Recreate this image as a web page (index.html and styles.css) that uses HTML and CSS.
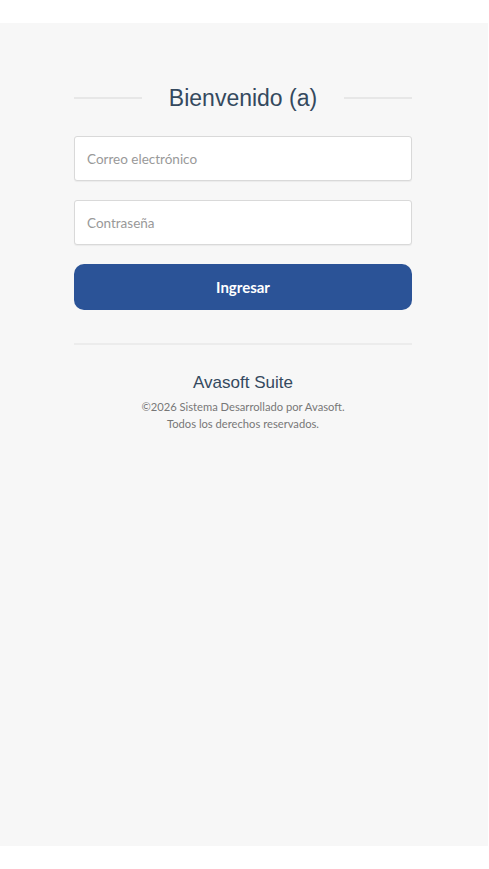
FILE: index.html
```html
<!DOCTYPE html>
<html lang="es">
<head>
<meta charset="utf-8">
<title>Avasoft Suite</title>
<link rel="stylesheet" href="styles.css">
</head>
<body>
<div class="page">
  <div class="login">
    <div class="heading">
      <span class="rule"></span>
      <h1 class="title">Bienvenido (a)</h1>
      <span class="rule"></span>
    </div>
    <form class="form">
      <input class="field" type="email" placeholder="Correo electrónico">
      <input class="field" type="password" placeholder="Contraseña">
      <button class="submit" type="button">Ingresar</button>
    </form>
    <hr class="divider">
    <div class="footer">
      <div class="brand">Avasoft Suite</div>
      <p class="copy">©2026 Sistema Desarrollado por Avasoft.<br>Todos los derechos reservados.</p>
    </div>
  </div>
</div>
</body>
</html>
```
FILE: styles.css
```css
html, body {
  margin: 0;
  padding: 0;
  background: #ffffff;
}
body {
  padding-top: 23px;
  font-family: "Liberation Sans", Arial, sans-serif;
}
.page {
  width: 488px;
  height: 823px;
  background: #f7f7f7;
  box-sizing: border-box;
  padding: 64px 0 0 74px;
}
.login {
  width: 338px;
}
.heading {
  display: flex;
  align-items: center;
  height: 22px;
}
.rule {
  flex: 1;
  height: 2px;
  background: #e7e7e7;
}
.title {
  margin: 0 27px;
  font-family: "Liberation Sans", Arial, sans-serif;
  font-weight: normal;
  font-size: 23px;
  line-height: 22px;
  color: #34495e;
  white-space: nowrap;
}
.form {
  display: flex;
  flex-direction: column;
  gap: 19px;
  margin-top: 27px;
}
.field {
  box-sizing: border-box;
  width: 338px;
  height: 45px;
  margin: 0;
  padding: 0 12px;
  border: 1px solid #d9d9d9;
  border-radius: 3px;
  background: #ffffff;
  box-shadow: 0 1px 1px rgba(0,0,0,0.05);
  font-family: Lato, "Liberation Sans", sans-serif;
  font-size: 13.5px;
  color: #555;
  outline: none;
}
.field::placeholder {
  color: #999;
}
.submit {
  height: 46px;
  margin: 0;
  border: none;
  border-radius: 10px;
  background: #2b5397;
  color: #ffffff;
  font-family: Lato, "Liberation Sans", sans-serif;
  font-weight: bold;
  font-size: 15px;
  cursor: pointer;
}
.divider {
  margin: 33px 0 0;
  border: none;
  height: 2px;
  background: #ececec;
}
.footer {
  text-align: center;
  margin-top: 28px;
}
.brand {
  font-family: "Liberation Sans", Arial, sans-serif;
  font-size: 17px;
  color: #34495e;
  line-height: 20px;
}
.copy {
  margin: 5px 0 0;
  font-family: Lato, "Liberation Sans", sans-serif;
  font-size: 11.2px;
  line-height: 17px;
  color: #777;
}
```
